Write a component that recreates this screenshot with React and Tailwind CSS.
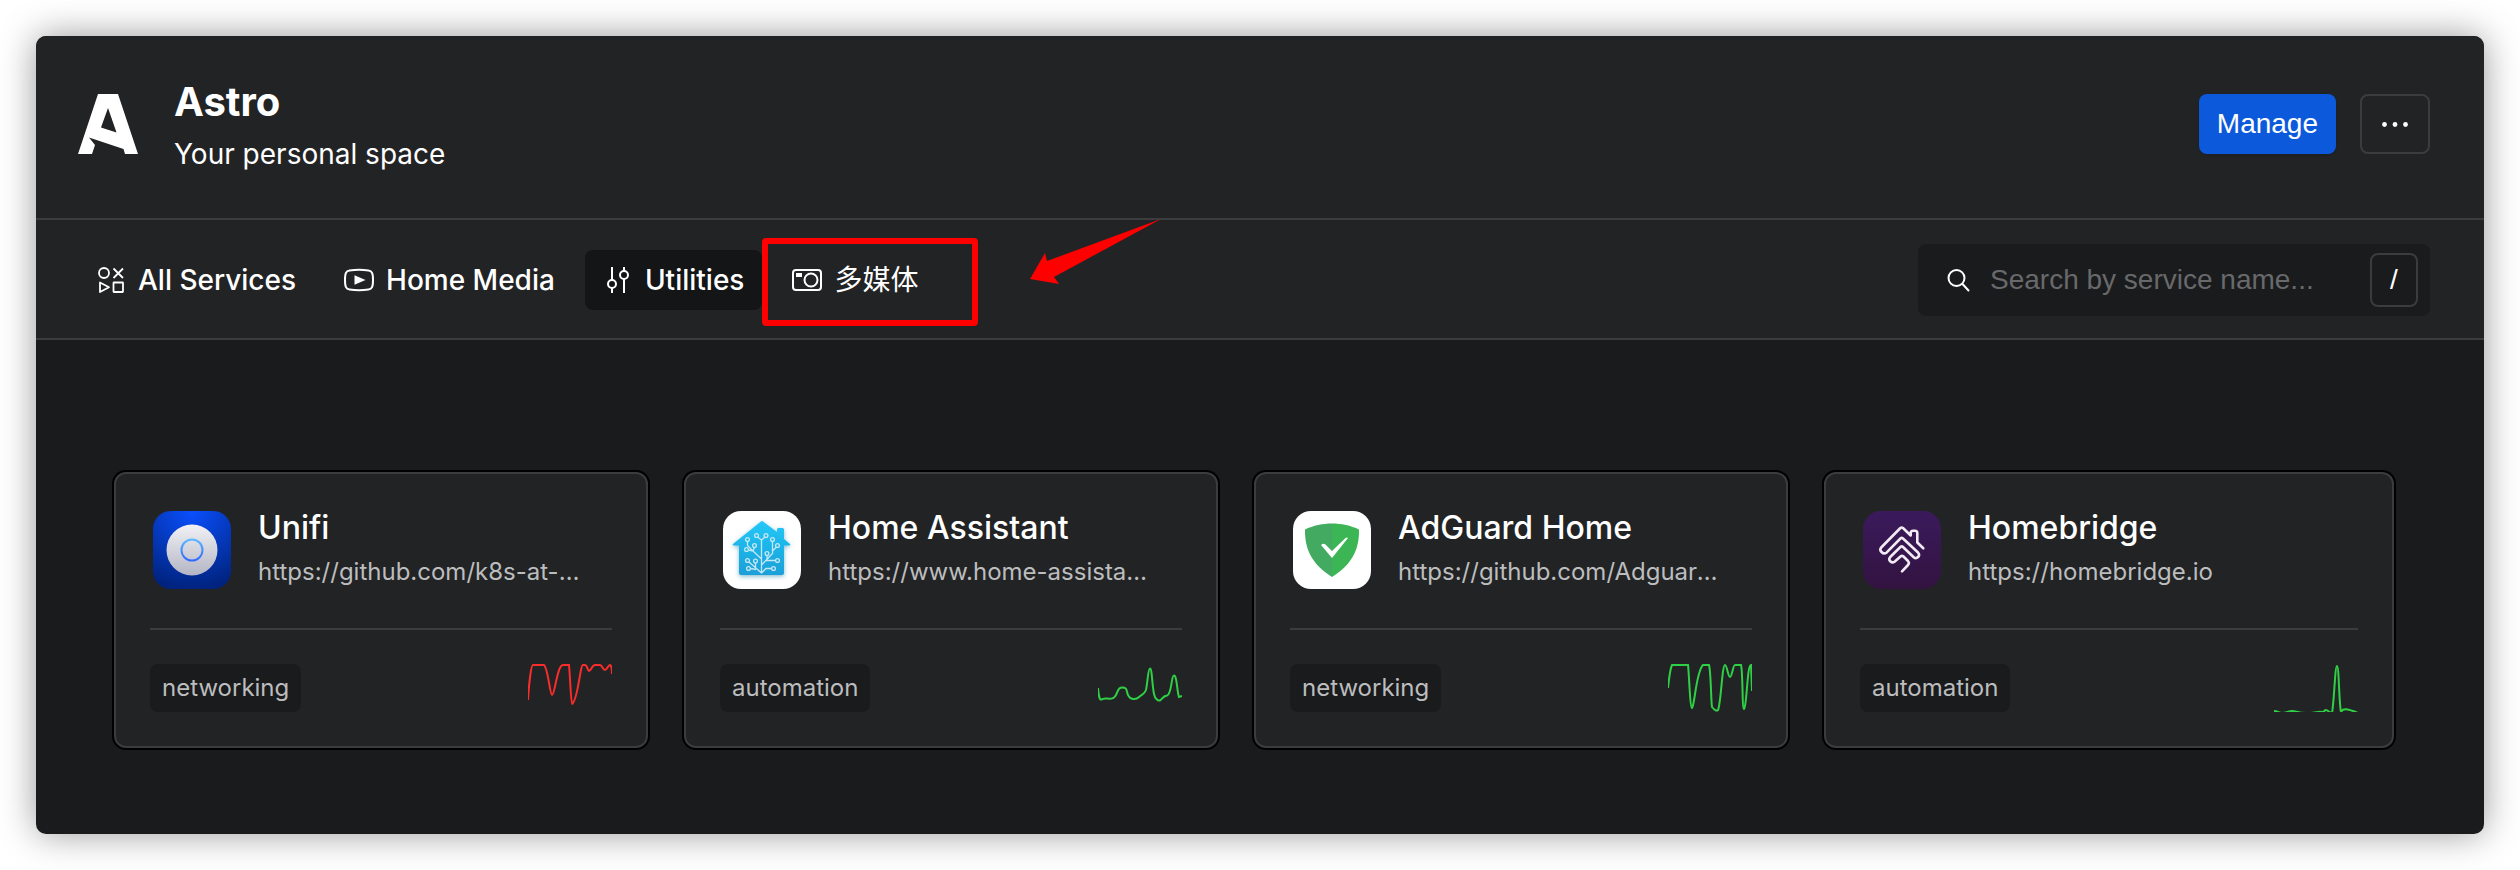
import React from "react";

const icon = "size-[30px] shrink-0";

function ShapesIcon() {
  return (
    <svg className={icon} viewBox="0 0 30 30" fill="none" stroke="currentColor" strokeWidth="1.8" strokeLinejoin="round">
      <circle cx="8" cy="8" r="5" />
      <path d="M17.5 3.500l9.500 9.500M27 3.500L17.500 13" />
      <path d="M4 17.500v9.500l9-4.750z" />
      <rect x="17.500" y="17.500" width="9.500" height="9.500" rx=".5" />
    </svg>
  );
}

function PlayIcon() {
  return (
    <svg className={icon} viewBox="0 0 30 30" fill="none" stroke="currentColor" strokeWidth="2">
      <path d="M1 15c0-7 1-9 4.500-9.500 5-.7 14-.7 19 0C28 6 29 8 29 15s-1 9-4.500 9.500c-5 .7-14 .7-19 0C2 24 1 22 1 15z" />
      <path d="M10.500 10.300v9.400L21.500 15z" fill="currentColor" stroke="none" />
    </svg>
  );
}

function SlidersIcon() {
  return (
    <svg className={icon} viewBox="0 0 30 30" fill="none" stroke="currentColor" strokeWidth="2">
      <path d="M9 2v13M9 23v5M21 2v4M21 14v14" />
      <circle cx="9" cy="19" r="4" />
      <circle cx="21" cy="10" r="4" />
    </svg>
  );
}

function CameraIcon() {
  return (
    <svg className={icon} viewBox="0 0 30 30" fill="none" stroke="currentColor" strokeWidth="2">
      <rect x="1" y="5" width="28" height="20" rx="3" />
      <circle cx="19" cy="15" r="6.500" />
      <path d="M4 8h6v4H4z" fill="currentColor" stroke="none" />
    </svg>
  );
}

function SearchIcon() {
  return (
    <svg className="size-6 shrink-0" viewBox="0 0 24 24" fill="none" stroke="currentColor" strokeWidth="2" strokeLinecap="round">
      <circle cx="10.500" cy="10" r="8" />
      <path d="M16.500 16l6 6.500" />
    </svg>
  );
}

function AstroLogo() {
  return (
    <svg className="size-[60px] shrink-0" viewBox="0 0 60 60" fill="#fff" aria-hidden="true">
      <path
        fillRule="evenodd"
        d="M20 0H40L60 60H47L45.500 55L11 43.500L17 51L14 60H0L20 0zM30 14L23 33.500L38.500 38.500z"
      />
    </svg>
  );
}

function Tile({ children, fill }) {
  return (
    <svg className="size-[84px] shrink-0" viewBox="0 0 84 84" aria-hidden="true">
      <rect x="3" y="3" width="78" height="78" rx="18" fill={fill} />
      {children}
    </svg>
  );
}

function UnifiLogo() {
  return (
    <Tile fill="url(#unifi-bg)">
      <defs>
        <radialGradient id="unifi-bg" cx=".5" cy="0" r="1">
          <stop offset="0" stopColor="#0a50ff" />
          <stop offset="1" stopColor="#00237f" />
        </radialGradient>
        <linearGradient id="unifi-disc" x2="0" y2="1">
          <stop offset="0" stopColor="#f1f1f5" />
          <stop offset="1" stopColor="#b4b5c4" />
        </linearGradient>
        <linearGradient id="unifi-ring" x2="0" y2="1">
          <stop offset="0" stopColor="#5bb8ff" />
          <stop offset="1" stopColor="#2f6bff" />
        </linearGradient>
      </defs>
      <circle cx="42" cy="42" r="25.500" fill="url(#unifi-disc)" />
      <circle cx="42" cy="42" r="10.500" fill="none" stroke="url(#unifi-ring)" strokeWidth="2" />
    </Tile>
  );
}

const circuitNodes = [
  [36.5, 27.5], [46, 27.5], [27.5, 31.5], [34.5, 37.5], [26.5, 41.5], [52.5, 31.5], [57.5, 37.5],
  [47, 45.5], [57.5, 52.5], [27.5, 52.5], [35.5, 53], [28.5, 60.5], [53.5, 60.5],
];

function HomeAssistantLogo() {
  return (
    <Tile fill="#fff">
      <defs>
        <linearGradient id="ha-bg" x2="0" y2="1">
          <stop offset="0" stopColor="#22c8f8" />
          <stop offset="1" stopColor="#1a9fd8" />
        </linearGradient>
        <filter id="ha-glow" x="-30%" y="-30%" width="160%" height="160%">
          <feDropShadow dx="0" dy="1.500" stdDeviation="2" floodColor="#1c7fa8" floodOpacity=".55" />
        </filter>
      </defs>
      <path
        filter="url(#ha-glow)"
        fill="url(#ha-bg)"
        d="M41 13.500q1-.8 2 0L57 24v-2.500q0-1.500 1.500-1.500h4q1.500 0 1.500 1.500v9.500l6 5q1 1.500-1 1.500h-5V65q0 2-2 2H21q-2 0-2-2V37.500h-5q-2 0-1-1.500z"
      />
      <g fill="none" stroke="#c3e8f4" strokeWidth="1.300">
        <path d="M41.500 65V32L37.500 29M41.500 32L45 29M41.500 51L33 43L27.500 37.500V33.500M33 43L28.500 42M33 43L34.500 39.500M41.500 57L52.500 45.500V33.500M47 51L47 47.500M52.500 43L56.500 39M46 52.500h9.500M41.500 65L29 54M35.500 59.500V55M36 61.500L30.500 60.500M41.500 65L46 60.500h5.500" />
        {circuitNodes.map(([x, y]) => (
          <circle key={`${x}-${y}`} cx={x} cy={y} r="1.900" />
        ))}
      </g>
    </Tile>
  );
}

function AdGuardLogo() {
  return (
    <Tile fill="#fff">
      <path fill="#42ab61" d="M42 15.500C33 15.500 23 17.500 15 21.500c0 9.500 0 31 27 47.500z" />
      <path fill="#3cb554" d="M42 15.500c9 0 19 2 27 6 0 9.500 0 31-27 47.500z" />
      <path fill="#fff" d="M31 37q3-2.500 5.500.5L42 43L55.500 30q1.500-1 2.500 0L42 50z" />
    </Tile>
  );
}

function HomebridgeLogo() {
  return (
    <Tile fill="url(#hb-bg)">
      <defs>
        <linearGradient id="hb-bg" x2="0" y2="1">
          <stop offset="0" stopColor="#3b1a5c" />
          <stop offset="1" stopColor="#321340" />
        </linearGradient>
      </defs>
      <path
        fill="none"
        stroke="#f1eaf4"
        strokeWidth="2.600"
        strokeLinecap="round"
        strokeLinejoin="round"
        d="M63.300 40.300L57.300 34.500V25Q57.300 22.700 55 22.700H53Q50.700 22.700 50.700 25V27.500L43 20Q41.700 19 40.400 20L21.200 39.500Q19.300 41.800 21.500 44Q24 46.500 26.500 44.700L40.400 30.500Q41.700 29.300 43 30.500L58 44.500Q60 46.800 58.300 48.800Q56 51 54 49.500L43 39Q41.700 37.800 40.400 39L30.200 49Q28.300 51.300 30.200 53.300Q32.500 55.300 34.500 53.800L40.500 48.500Q42 47.300 43.500 48.500L48 53Q49.800 55 48 57L42 63.300"
      />
    </Tile>
  );
}

const tabs = [
  { label: "All Services", Icon: ShapesIcon },
  { label: "Home Media", Icon: PlayIcon },
  { label: "Utilities", Icon: SlidersIcon, active: true },
  { label: "多媒体", Icon: CameraIcon, marked: true },
];

const services = [
  {
    name: "Unifi",
    url: "https://github.com/k8s-at-home/charts",
    tag: "networking",
    Logo: UnifiLogo,
    stroke: "#fa2d2d",
    line: "M0 36C1 20 3 1 5 1H16C20 4 22 31 24 31C27 31 29 1 35 1H41C42 10 43 40 44 40C50 37 52 1 55 1H57C59 1 60 7 61 7C63 7 64 1 67 1H72C74 1 75 6 77 6C79 6 80 1 82 1Q84 2 84 10",
  },
  {
    name: "Home Assistant",
    url: "https://www.home-assistant.io/installation",
    tag: "automation",
    Logo: HomeAssistantLogo,
    stroke: "#2fd045",
    line: "M0 24Q1 36 3 35.500C6 35 5 34 9 34.500C13 35 16 35 18 31C20 27 20 23.500 24 23.500C30 23.500 28 27 30 31C32 36 38 36 41 33C44 30 46 31 48 26C50 16 50 4.500 52 4.500C54 4.500 54 20 56 30C57 35 60 37 62 36.500C64 35 65 32 69 31.500C74 30 73 11.500 76 11.500C79 11.500 79 28 81 33L84 32",
  },
  {
    name: "AdGuard Home",
    url: "https://github.com/AdguardTeam/AdGuardHome",
    tag: "networking",
    Logo: AdGuardLogo,
    stroke: "#2fd045",
    line: "M0 24Q2 5 4 1H20C21 8 22 44 24 44C27 40 28 8 35 1H41C43 8 43 38 44 43Q48 48 50 46C53 40 54 1 57 1C59 1 60 13 62 13C64 13 65 1 67 1H73C75 8 74 45 76 45C79 42 79 1 83 1L84 27",
  },
  {
    name: "Homebridge",
    url: "https://homebridge.io",
    tag: "automation",
    Logo: HomebridgeLogo,
    stroke: "#2fd045",
    line: "M0 47C4 47 4 49 8 49C13 49 14 47 18 47C22 47 24 49 32 49C42 49 44 47 48 48C51 48 50 46 52 46C54 46 55 49 58 49C60 40 61 2 63 2C65 2 65 40 67 48C69 43 77 46 84 49",
  },
];

function Tab({ label, Icon, active, marked }) {
  return (
    <li className="relative">
      <button
        type="button"
        className={`flex h-[60px] items-center gap-3 rounded-lg px-[18px] text-[28px] whitespace-nowrap ${active ? "bg-[#141517]" : ""} ${marked ? "font-normal" : "font-medium"}`}
      >
        <Icon />
        {label}
      </button>
      {marked && (
        <>
          <span className="pointer-events-none absolute -top-3 -left-3 h-[88px] w-[216px] rounded-sm border-6 border-[#fe0000]" />
          <svg className="pointer-events-none absolute top-[-31px] left-[256px] h-[66px] w-[132px]" viewBox="0 0 132 66" fill="#fe0000" aria-hidden="true">
            <path d="M131 0L17 42L15 34L0 60L29 65L24 58z" />
          </svg>
        </>
      )}
    </li>
  );
}

function ServiceCard({ name, url, tag, Logo, stroke, line }) {
  return (
    <article className="mr-9 rounded-xl border-2 border-[#3b3c3e] bg-[#222325] p-[34px] ring-2 ring-black last:mr-0">
      <div className="flex items-center gap-6 border-b-2 border-[#3b3c3e] pb-9">
        <Logo />
        <div className="flex min-w-0 flex-1 flex-col gap-1 pr-6">
          <h2 className="truncate text-[32px] leading-10 font-medium">{name}</h2>
          <a href={url} className="truncate text-2xl leading-10 text-[#bcbdbe]">{url}</a>
        </div>
      </div>
      <div className="flex items-center justify-between pt-[34px]">
        <span className="flex h-12 items-center rounded-lg bg-[#1a1b1d] px-3 text-2xl text-[#bcbdbe]">{tag}</span>
        <svg className="h-12 w-[84px]" viewBox="0 0 84 48" fill="none" stroke={stroke} strokeWidth="2" aria-hidden="true">
          <path d={line} />
        </svg>
      </div>
    </article>
  );
}

export default function App() {
  return (
    <div className="min-h-screen bg-white p-9 font-['Inter','Noto_Sans_CJK_SC',sans-serif] text-white">
      <div className="overflow-hidden rounded-[10px] bg-[#1a1b1d] shadow-[0_0_36px_rgba(0,0,0,0.4)]">
        <header className="flex h-[184px] items-center justify-between border-b-2 border-[#3b3c3e] bg-[#222325] pr-[54px] pb-1.5 pl-[42px]">
          <div className="flex items-center gap-9">
            <AstroLogo />
            <div className="pt-2">
              <h1 className="text-[40px] leading-[52px] font-bold">Astro</h1>
              <p className="text-[28px] leading-[52px]">Your personal space</p>
            </div>
          </div>
          <div className="flex items-center gap-6">
            <button type="button" className="h-[60px] rounded-lg bg-[#0c5adb] px-[18px] font-['Liberation_Sans',sans-serif] text-[28px] shadow">Manage</button>
            <button type="button" aria-label="More options" className="flex h-[60px] w-[70px] items-center justify-center rounded-lg border-2 border-[#3b3c3e]">
              <svg className="h-[5px] w-[26px]" viewBox="0 0 26 5" fill="currentColor">
                <circle cx="2.500" cy="2.500" r="2.400" />
                <circle cx="13" cy="2.500" r="2.400" />
                <circle cx="23.500" cy="2.500" r="2.400" />
              </svg>
            </button>
          </div>
        </header>
        <nav className="flex h-[120px] items-center justify-between border-b-2 border-[#3b3c3e] bg-[#222325] pt-0.5 pr-[54px] pl-[42px]">
          <ul className="flex items-center gap-3">
            {tabs.map((tab) => (
              <Tab key={tab.label} {...tab} />
            ))}
          </ul>
          <div className="flex h-[72px] w-[512px] items-center gap-5 rounded-lg bg-[#1a1b1d] pr-3 pl-7">
            <SearchIcon />
            <input
              type="search"
              aria-label="Search by service name"
              placeholder="Search by service name..."
              className="min-w-0 flex-1 bg-transparent font-['Liberation_Sans',sans-serif] text-[28px] outline-none placeholder:text-[#68696b]"
            />
            <kbd className="flex h-[54px] w-12 items-center justify-center rounded-lg border-2 border-[#3b3c3e] font-['Liberation_Sans',sans-serif] text-[28px]">/</kbd>
          </div>
        </nav>
        <main className="grid grid-cols-4 pt-[132px] pr-[90px] pb-[86px] pl-[78px]">
          {services.map((service) => (
            <ServiceCard key={service.name} {...service} />
          ))}
        </main>
      </div>
    </div>
  );
}
